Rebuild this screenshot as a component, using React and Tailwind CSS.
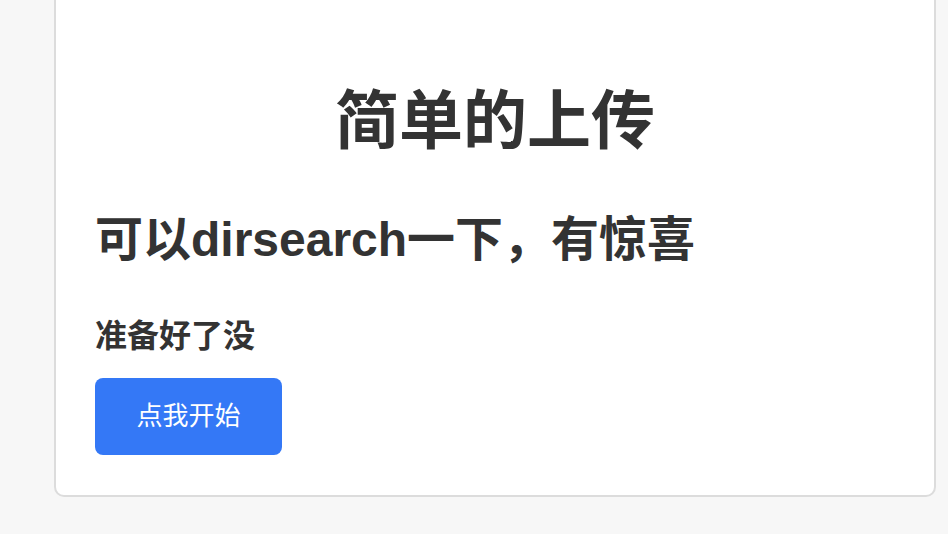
export default function App() {
  return (
    <div className="min-h-[534px] bg-[#f7f7f7] overflow-hidden" style={{ fontFamily: '"Liberation Sans", "Noto Sans CJK SC", sans-serif' }}>
      <div className="ml-[54px] mr-[12px] mt-[-20px] bg-white border-2 border-[#dcdcdc] rounded-[10px] px-[39px] pt-[101px] pb-[40px] text-[#333]">
        <h1 className="text-center text-[64px] font-bold leading-[76px]">简单的上传</h1>
        <h2 className="mt-[53px] text-[48px] font-bold leading-[56px]">可以dirsearch一下，有惊喜</h2>
        <h3 className="mt-[50px] text-[32px] font-bold leading-[36px]">准备好了没</h3>
        <button className="mt-[24px] w-[187px] h-[77px] rounded-[8px] bg-[#3478f6] text-white text-[26px]">点我开始</button>
      </div>
    </div>
  );
}
